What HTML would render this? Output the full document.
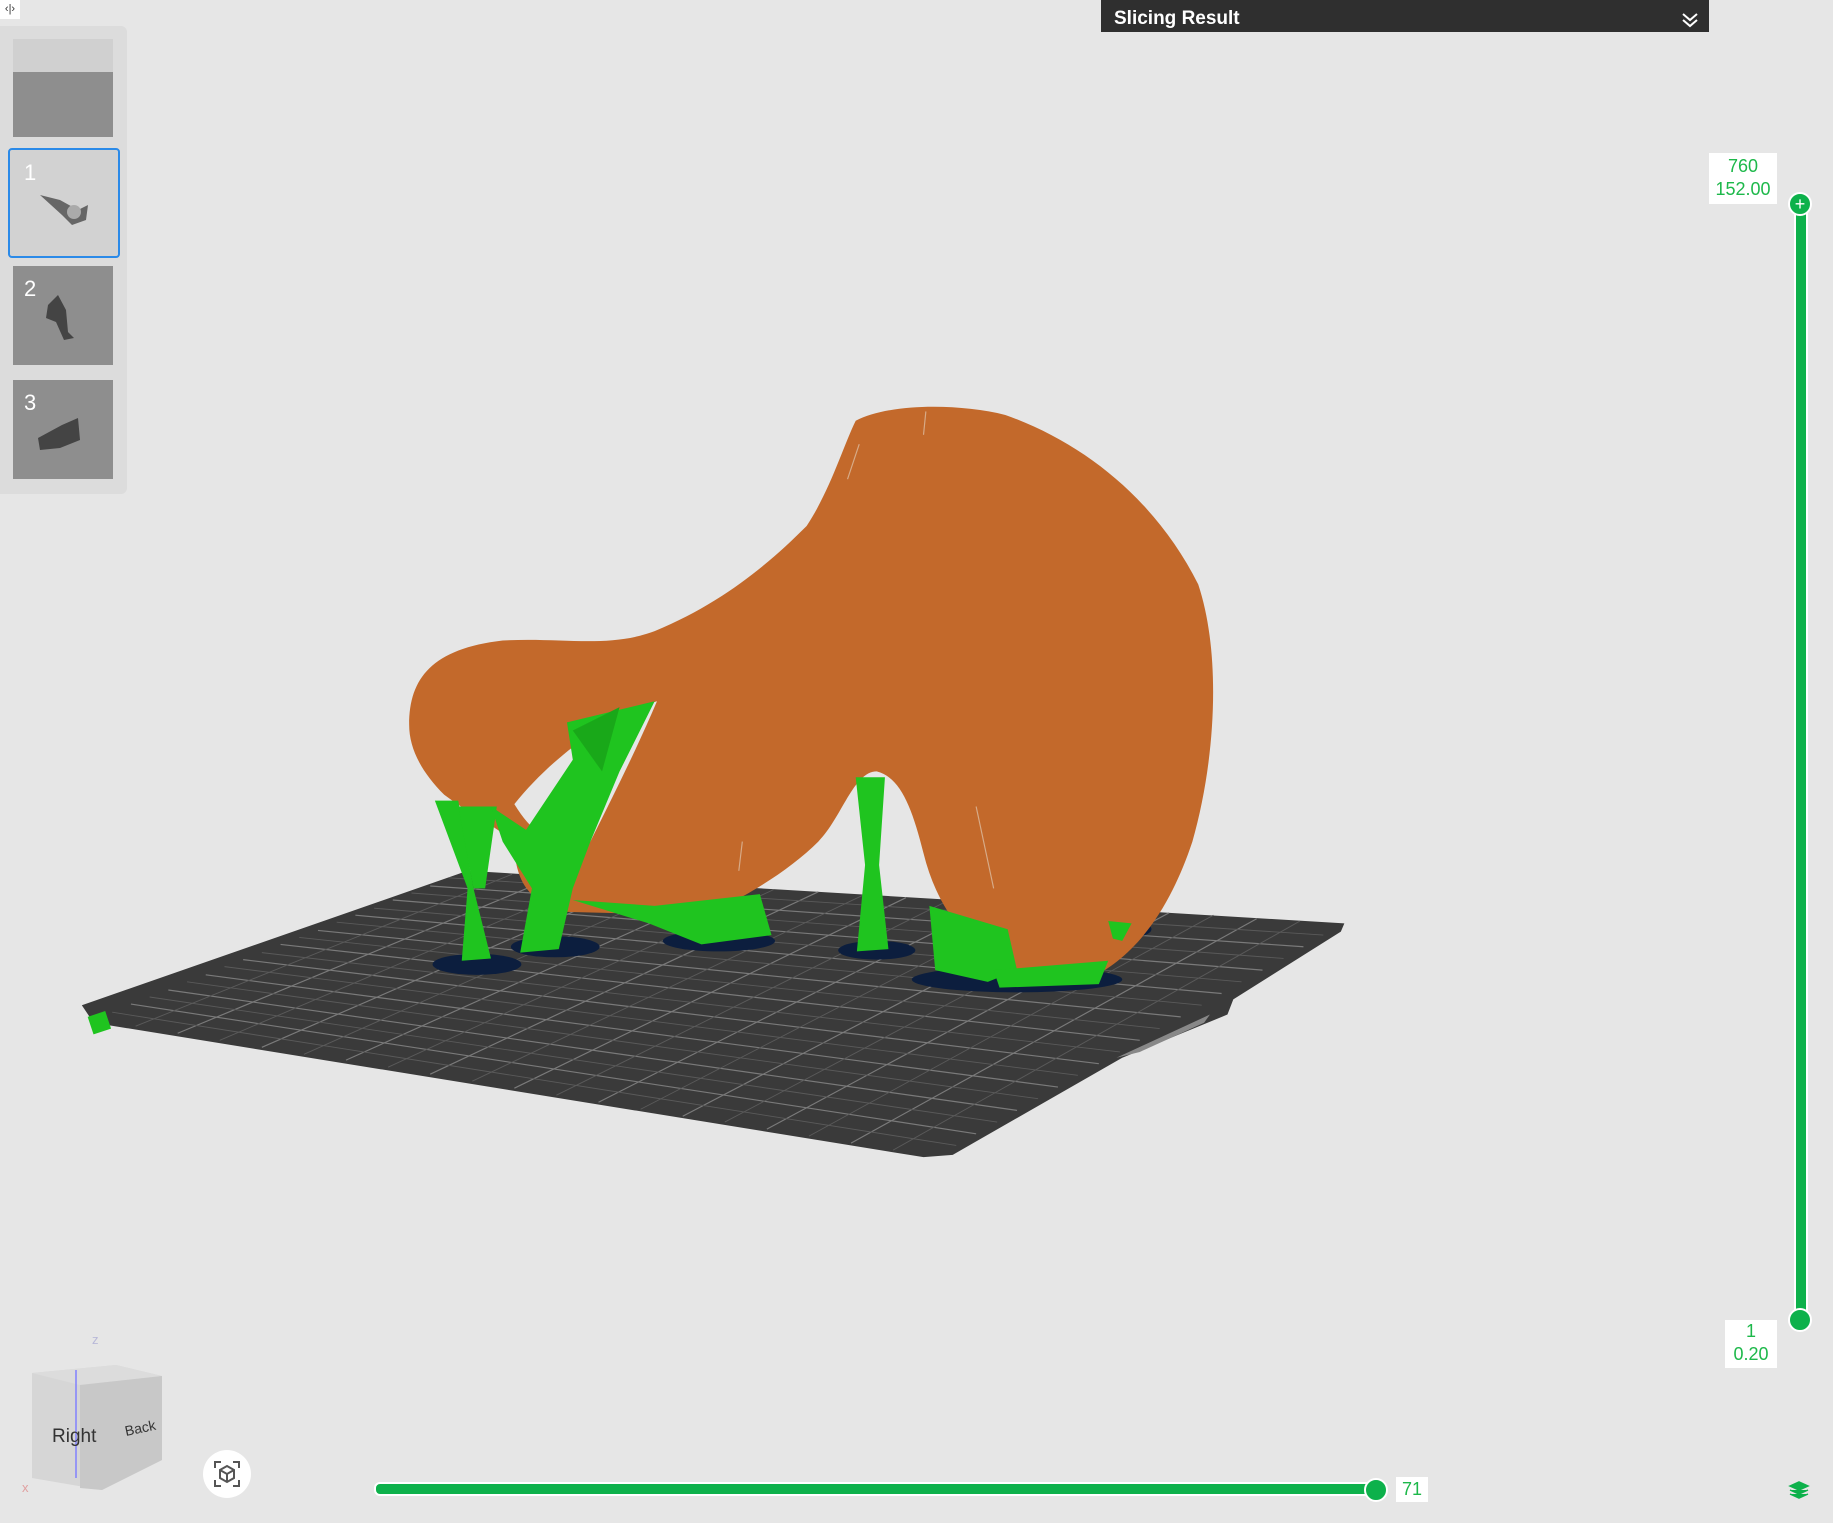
<!DOCTYPE html>
<html><head><meta charset="utf-8"><style>
body{margin:0;width:1833px;height:1523px;background:#e6e6e6;overflow:hidden;position:relative;font-family:"Liberation Sans",sans-serif}
.abs{position:absolute}
</style></head><body>
<div class="abs" style="left:0;top:0;width:20px;height:19px;background:#fff;font-size:11px;line-height:19px;text-align:center;color:#333">‹|›</div>
<div class="abs" style="left:0;top:26px;width:127px;height:468px;background:#dcdcdc;border-radius:0 6px 6px 0"></div>
<div class="abs" style="left:13px;top:39px;width:100px;height:33px;background:#d0d0d0"></div>
<div class="abs" style="left:13px;top:72px;width:100px;height:65px;background:#8e8e8e"></div>
<div class="abs" style="left:8px;top:148px;width:108px;height:106px;border:2px solid #2b8ae8;border-radius:4px;background:#d2d2d2"></div>
<div class="abs" style="left:13px;top:266px;width:100px;height:99px;background:#8e8e8e"></div>
<div class="abs" style="left:13px;top:380px;width:100px;height:99px;background:#8e8e8e"></div>
<div class="abs" style="left:24px;top:160px;color:#fff;font-size:22px">1</div>
<div class="abs" style="left:24px;top:276px;color:#fff;font-size:22px">2</div>
<div class="abs" style="left:24px;top:390px;color:#fff;font-size:22px">3</div>
<svg class="abs" style="left:0;top:0" width="140" height="500">
<path d="M40 195 L60 200 L78 210 L88 205 L86 220 L72 225 L62 215 Z" fill="#666"/>
<circle cx="74" cy="212" r="7" fill="#aaa"/>
<path d="M48 305 L58 295 L66 310 L68 332 L74 338 L64 340 L56 322 L46 318 Z" fill="#444"/>
<path d="M38 438 L62 425 L78 418 L80 440 L60 448 L40 450 Z" fill="#444"/>
</svg>
<div class="abs" style="left:1101px;top:0;width:608px;height:32px;background:#2f2f2f;color:#fff;font-size:19px;font-weight:bold;line-height:38px;padding-left:13px;box-sizing:border-box">Slicing Result</div>
<svg class="abs" style="left:1680px;top:10px" width="20" height="18"><path d="M3 4 L10 10 L17 4 M3 10 L10 16 L17 10" stroke="#fff" stroke-width="2" fill="none"/></svg>
<div class="abs" style="left:1709px;top:153px;width:68px;height:49px;background:#fff;color:#1db84a;font-size:18px;text-align:center;line-height:23px;padding-top:2px">760<br>152.00</div>
<div class="abs" style="left:1725px;top:1320px;width:52px;height:48px;background:#fff;color:#1db84a;font-size:18px;text-align:center;line-height:23px">1<br>0.20</div>
<div class="abs" style="left:1794px;top:200px;width:10px;height:1122px;background:#0db14b;border:2px solid #fff;border-radius:6px"></div>
<div class="abs" style="left:1788px;top:192px;width:20px;height:20px;border-radius:50%;background:#0db14b;border:2px solid #fff;color:#fff;font-size:18px;line-height:20px;text-align:center">+</div>
<div class="abs" style="left:1788px;top:1308px;width:20px;height:20px;border-radius:50%;background:#0db14b;border:2px solid #fff"></div>
<div class="abs" style="left:374px;top:1482px;width:1005px;height:10px;background:#0db14b;border:2px solid #fff;border-radius:6px"></div>
<div class="abs" style="left:1364px;top:1478px;width:20px;height:20px;border-radius:50%;background:#0db14b;border:2px solid #fff"></div>
<div class="abs" style="left:1396px;top:1477px;width:32px;height:25px;background:#fff;color:#1db84a;font-size:18px;text-align:center;line-height:25px">71</div>
<svg class="abs" style="left:1788px;top:1480px" width="22" height="20"><path d="M2 6 L11 2 L20 6 L11 10Z M2 10 L11 14 L20 10 M2 14 L11 18 L20 14" fill="#0db14b" stroke="#0db14b" stroke-width="1.5"/></svg>
<svg class="abs" style="left:0;top:0" width="1833" height="1523" viewBox="0 0 1568 1303" preserveAspectRatio="none">
<path d="M70 860 L400 745 L1150 790 L1147 797 L1055 855 L1050 868 L960 905 L815 988 L790 990 L80 875 Z" fill="#3a3a3a"/>
<g stroke="#7a7a7a" stroke-width="1">
<path d="M112 859L835 970M144 847L870 950M176 834L905 930M208 821L940 910M240 808L975 890M272 796L1010 870M304 783L1045 850M336 770L1080 830M368 758L1115 810"/>
<path d="M152 884L475 750M224 896L550 754M296 907L625 759M368 919L700 763M440 931L775 768M512 943L850 772M584 955L925 777M656 966L1000 781M728 978L1075 786"/>
</g>
<g stroke="#5a5a5a" stroke-width="0.8">
<path d="M96 866L818 980M128 853L853 960M160 840L888 940M192 827L922 920M224 815L958 900M256 802L992 880M288 789L1028 860M320 777L1062 840M352 764L1098 820M384 751L1132 800"/>
<path d="M116 878L438 748M188 890L512 752M260 902L588 756M332 913L662 761M404 925L738 766M476 937L812 770M548 949L888 774M620 960L962 779M692 972L1038 783M764 984L1112 788"/>
</g>
<path d="M75 870 L90 865 L95 880 L80 885Z" fill="#1fc41f"/>
<path d="M955 905 L1035 868 L1030 875 L975 900Z" fill="#888"/>
<g fill="#0c1e3e">
<ellipse cx="408" cy="825" rx="38" ry="9"/><ellipse cx="475" cy="810" rx="38" ry="9"/><ellipse cx="615" cy="805" rx="48" ry="9"/>
<ellipse cx="750" cy="813" rx="33" ry="8"/><ellipse cx="870" cy="838" rx="90" ry="11"/><ellipse cx="960" cy="795" rx="25" ry="8"/>
</g>
<path d="M350 620 C350 580 370 555 430 548 C480 545 520 555 560 540 C620 515 660 480 690 450 C710 420 722 380 732 360 C760 345 820 345 860 355 C930 380 990 430 1025 500 C1045 560 1040 650 1020 720 C1000 780 970 820 930 838 C900 845 870 842 850 820 C820 800 800 770 790 730 C780 690 770 665 750 660 C730 660 720 700 700 720 C680 740 650 760 620 775 L560 782 L480 780 C450 770 440 750 440 720 C420 705 400 695 380 680 C360 660 350 640 350 620 Z" fill="#c3692b"/>
<path d="M440 688 C470 650 520 612 562 600 C545 640 525 680 505 720 C482 730 458 718 440 688 Z" fill="#e6e6e6"/>
<g fill="#1fc41f">
<path d="M372 685 L392 685 L405 760 L420 820 L395 822 L400 760 Z"/>
<path d="M392 690 L425 690 L415 760 L405 760Z"/>
<path d="M420 690 L450 710 L490 650 L485 618 L560 600 L530 660 L505 720 L490 760 L478 812 L445 815 L455 760 L430 720Z"/>
<path d="M490 625 L530 605 L515 660 Z" fill="#19a819"/>
<path d="M490 770 L560 775 L650 765 L660 800 L600 808 L555 790Z"/>
<path d="M732 665 L757 665 L752 740 L760 812 L733 814 L740 740Z"/>
<path d="M795 775 L862 795 L870 830 L845 840 L800 830Z"/>
<path d="M850 830 L948 822 L940 842 L855 845Z"/>
<path d="M948 788 L968 790 L960 805 L952 803Z"/>
</g>
<g stroke="#e0c8b0" stroke-width="1" fill="none" opacity=".7">
<path d="M735 380 L725 410 M792 352 L790 372 M835 690 L850 760 M635 720 L632 745"/>
</g>
</svg>
<svg class="abs" style="left:20px;top:1330px" width="150" height="170">
<text x="72" y="14" fill="#b8b8d8" font-size="13" font-family="Liberation Sans">z</text>
<path d="M12 43 L96 35 L142 46 L142 130 L82 160 L12 148Z" fill="#d2d2d2" opacity=".85"/>
<path d="M12 43 L96 35 L142 46 L60 55Z" fill="#dcdcdc"/>
<path d="M60 55 L142 46 L142 130 L82 160 L60 158Z" fill="#c8c8c8"/>
<line x1="56" y1="148" x2="56" y2="40" stroke="#8080ff" stroke-width="1.5"/>
<text x="32" y="112" font-size="19" fill="#333" font-family="Liberation Sans">Right</text>
<text x="106" y="106" font-size="14" fill="#333" font-family="Liberation Sans" transform="rotate(-12 106 106)">Back</text>
<text x="2" y="162" fill="#e0a0a0" font-size="13">x</text><text x="160" y="150" fill="#a0d0a0" font-size="13">y</text>
</svg>
<div class="abs" style="left:203px;top:1450px;width:48px;height:48px;border-radius:50%;background:#fff"></div>
<svg class="abs" style="left:211px;top:1458px" width="32" height="32"><path d="M4 10 V4 H10 M22 4 H28 V10 M28 22 V28 H22 M10 28 H4 V22 M16 8 L23 12 V20 L16 24 L9 20 V12Z M9 12 L16 16 L23 12 M16 16 V24" fill="none" stroke="#555" stroke-width="2"/></svg>
</body></html>
